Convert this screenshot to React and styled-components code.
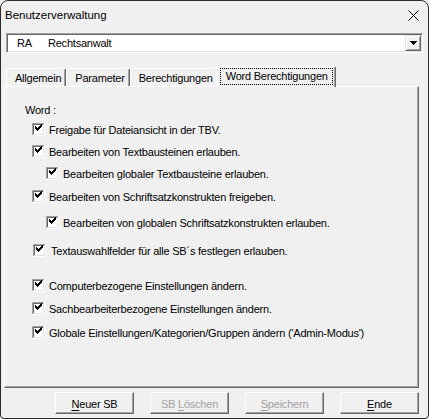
import React from "react";
import styled, { createGlobalStyle } from "styled-components";

const GlobalStyle = createGlobalStyle`
  html, body { margin: 0; padding: 0; background: #f0f0f0; }
  body {
    font-family: "Liberation Sans", Arial, sans-serif;
    font-size: 11px;
    color: #000;
    letter-spacing: -0.22px;
  }
`;

const Window = styled.div`
  width: 429px;
  height: 419px;
  box-sizing: border-box;
  border: 1px solid #2b2b2b;
  border-radius: 8px 8px 4px 4px;
  background: #f0f0f0;
  display: flex;
  flex-direction: column;
  overflow: hidden;
`;

const TitleBar = styled.div`
  height: 28px;
  flex: none;
  display: flex;
  align-items: center;
  justify-content: space-between;
  padding: 0 9px 0 4px;
  font-size: 11.5px;
  letter-spacing: 0;
`;

const Combo = styled.div`
  margin: 4px 5px 0 5px;
  height: 20px;
  box-sizing: border-box;
  display: flex;
  align-items: center;
  background: #fff;
  border: 1px solid;
  border-color: #a0a0a0 #fff #fff #a0a0a0;
  box-shadow: inset 1px 1px #696969, inset -1px -1px #e3e3e3;
  padding: 0 1px 0 10px;
`;

const Code = styled.span`
  width: 31px;
`;

const ComboText = styled.span`
  flex: 1;
`;

const DropButton = styled.div`
  width: 16px;
  height: 16px;
  box-sizing: border-box;
  display: flex;
  align-items: center;
  justify-content: center;
  background: #f0f0f0;
  border: 1px solid;
  border-color: #e3e3e3 #696969 #696969 #e3e3e3;
  box-shadow: inset 1px 1px #fff, inset -1px -1px #a0a0a0;
`;

const TabRow = styled.div`
  margin: 13px 0 0 5px;
  height: 20px;
  display: flex;
  align-items: flex-end;
`;

const Tab = styled.div`
  position: relative;
  height: ${p => (p.$active ? "21px" : "18px")};
  margin: ${p => (p.$active ? "0 -2px -1px -2px" : "0")};
  padding: 1px ${p => (p.$active ? "2px" : "4px")} 0 ${p => (p.$active ? "3px" : "8px")};
  z-index: ${p => (p.$active ? 1 : 0)};
  box-sizing: border-box;
  display: flex;
  align-items: ${p => (p.$active ? "flex-start" : "center")};
  background: #f0f0f0;
  border-top: 1px solid #fff;
  border-left: 1px solid #fff;
  border-right: 1px solid #696969;
  box-shadow: inset -1px 0 #a0a0a0;
  border-top-left-radius: 2px;
  border-top-right-radius: 2px;
`;

const Focus = styled.span`
  border: 1px dotted #000;
  padding: 1px 4px 2px 5px;
`;

const Panel = styled.div`
  margin: 0 9px 0 3px;
  height: 302px;
  flex: none;
  box-sizing: border-box;
  border: 1px solid;
  border-color: #fff #696969 #696969 #fff;
  box-shadow: inset -1px -1px #a0a0a0;
  padding: 17px 0 0 20px;
  display: flex;
  flex-direction: column;
`;

const GroupLabel = styled.div`
  height: 13px;
  line-height: 13px;
`;

const Row = styled.div`
  display: flex;
  align-items: center;
  height: 13px;
  margin-top: ${p => p.$gap}px;
  padding-left: ${p => 7 + (p.$indent || 0)}px;
  gap: ${p => p.$space || 4}px;
  white-space: nowrap;
`;

const Buttons = styled.div`
  margin: 4px 9px 0 0;
  display: flex;
  justify-content: flex-end;
  gap: 16px;
`;

const Button = styled.div`
  width: 79px;
  height: 22px;
  box-sizing: border-box;
  display: flex;
  align-items: center;
  justify-content: center;
  border: 1px solid;
  border-color: #fff #696969 #696969 #fff;
  box-shadow: inset -1px -1px #a0a0a0;
  color: ${p => (p.$disabled ? "#a0a0a0" : "#000")};
  padding-top: 1px;
  & u { text-decoration-thickness: 1px; text-underline-offset: 2px; }
`;

function CheckBox() {
  const cols = [5, 6, 7, 6, 5, 4, 3];
  return (
    <svg width="13" height="13" viewBox="0 0 13 13" shapeRendering="crispEdges" style={{ flex: "none" }}>
      <rect x="0" y="0" width="13" height="13" fill="#fff" />
      <rect x="0" y="0" width="12" height="1" fill="#a0a0a0" />
      <rect x="0" y="0" width="1" height="12" fill="#a0a0a0" />
      <rect x="1" y="1" width="10" height="1" fill="#696969" />
      <rect x="1" y="1" width="1" height="10" fill="#696969" />
      <rect x="1" y="11" width="11" height="1" fill="#e3e3e3" />
      <rect x="11" y="1" width="1" height="11" fill="#e3e3e3" />
      {cols.map((y, i) => (
        <rect key={i} x={3 + i} y={y - 2} width="1" height="3" fill="#000" />
      ))}
    </svg>
  );
}

const options = [
  { text: "Freigabe für Dateiansicht in der TBV.", gap: 6 },
  { text: "Bearbeiten von Textbausteinen erlauben.", gap: 9 },
  { text: "Bearbeiten globaler Textbausteine erlauben.", gap: 9, indent: 14 },
  { text: "Bearbeiten von Schriftsatzkonstrukten freigeben.", gap: 10 },
  { text: "Bearbeiten von globalen Schriftsatzkonstrukten erlauben.", gap: 13, indent: 14 },
  { text: "Textauswahlfelder für alle SB´s festlegen erlauben.", gap: 15, indent: 1, space: 5 },
  { text: "Computerbezogene Einstellungen ändern.", gap: 22 },
  { text: "Sachbearbeiterbezogene Einstellungen ändern.", gap: 10 },
  { text: "Globale Einstellungen/Kategorien/Gruppen ändern ('Admin-Modus')", gap: 11 },
];

export default function App() {
  return (
    <>
      <GlobalStyle />
      <Window>
        <TitleBar>
          <span>Benutzerverwaltung</span>
          <svg width="11" height="11" viewBox="0 0 11 11">
            <path d="M0.5 0.5 L10.5 10.5 M10.5 0.5 L0.5 10.5" stroke="#000" strokeWidth="1" />
          </svg>
        </TitleBar>
        <Combo>
          <Code>RA</Code>
          <ComboText>Rechtsanwalt</ComboText>
          <DropButton>
            <svg width="7" height="4" viewBox="0 0 7 4" shapeRendering="crispEdges">
              <path d="M0 0 H7 L3.5 4 Z" fill="#000" />
            </svg>
          </DropButton>
        </Combo>
        <TabRow>
          <Tab>Allgemein</Tab>
          <Tab>Parameter</Tab>
          <Tab>Berechtigungen</Tab>
          <Tab $active>
            <Focus>Word Berechtigungen</Focus>
          </Tab>
        </TabRow>
        <Panel>
          <GroupLabel>Word :</GroupLabel>
          {options.map(o => (
            <Row key={o.text} $gap={o.gap} $indent={o.indent} $space={o.space}>
              <CheckBox />
              <span>{o.text}</span>
            </Row>
          ))}
        </Panel>
        <Buttons>
          <Button><span><u>N</u>euer SB</span></Button>
          <Button $disabled><span>SB <u>L</u>öschen</span></Button>
          <Button $disabled><span><u>S</u>peichern</span></Button>
          <Button><span><u>E</u>nde</span></Button>
        </Buttons>
      </Window>
    </>
  );
}
